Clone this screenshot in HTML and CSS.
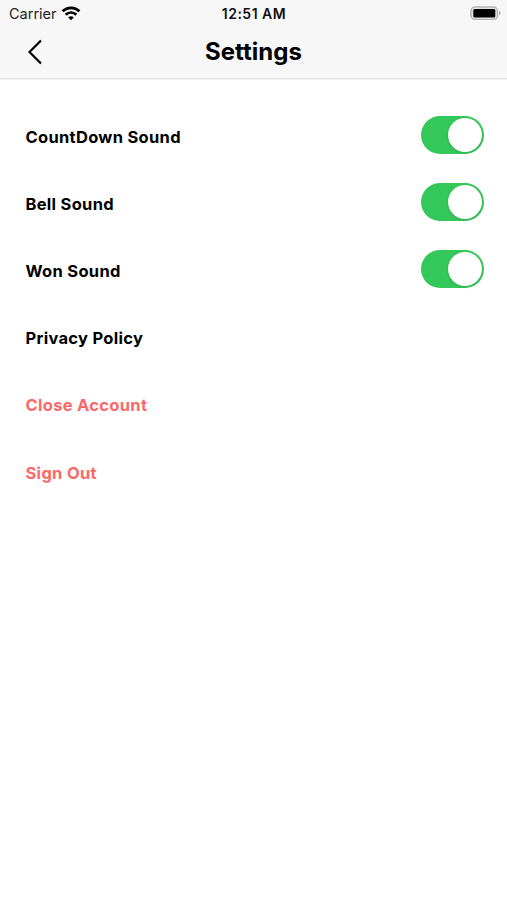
FILE: index.html
```html
<!DOCTYPE html>
<html lang="en">
<head>
<meta charset="utf-8">
<title>Settings</title>
<link rel="stylesheet" href="styles.css">
</head>
<body>
<header class="header">
  <div class="status">
    <div class="carrier"><span>Carrier</span>
      <svg class="wifi" viewBox="0 0 20 15" width="20" height="15"><path d="M1.600 5.300a12 12 0 0 1 16.800 0M4.700 8.700a7.500 7.500 0 0 1 10.600 0" fill="none" stroke="#000" stroke-width="2.700"/><path d="M7.200 11.400a4.200 4.200 0 0 1 5.600 0L10 14.300z"/></svg>
    </div>
    <div class="time">12:51 AM</div>
    <svg class="battery" viewBox="0 0 31 14" width="31" height="14"><rect x="1" y="1" width="26.500" height="12.500" rx="4" fill="#e4e4e4" stroke="#b5b5b5" stroke-width="1.500"/><rect x="3.300" y="3" width="22" height="8.500" rx="1.500"/><path d="M29 5q1.700.7 1.700 2T29 9z" fill="#aaa"/></svg>
  </div>
  <div class="nav">
    <svg class="back" viewBox="0 0 16 26" width="16" height="26"><path d="M14 1.500 2.500 13 14 24.500" fill="none" stroke="#000" stroke-width="2.200"/></svg>
    <h1 class="title">Settings</h1>
  </div>
</header>
<main class="list">
  <div class="row"><span class="label">CountDown Sound</span><span class="toggle"></span></div>
  <div class="row"><span class="label">Bell Sound</span><span class="toggle"></span></div>
  <div class="row"><span class="label">Won Sound</span><span class="toggle"></span></div>
  <div class="row"><span class="label">Privacy Policy</span></div>
  <div class="row danger"><span class="label">Close Account</span></div>
  <div class="row danger"><span class="label">Sign Out</span></div>
</main>
</body>
</html>
```
FILE: styles.css
```css
* { box-sizing: border-box; }
body { margin: 0; min-height: 900px; background: #fff; color: #000; font-family: Inter, sans-serif; }
.header { height: 79px; background: #f7f7f7; border-bottom: 1px solid #e6e6e6; box-shadow: 0 1px 1px #f0f0f0; }
.status { display: grid; grid-template-columns: 1fr auto 1fr; align-items: center; height: 27px; padding: 0 6px 0 9px; font-size: 14.5px; }
.carrier { display: flex; align-items: center; gap: 4px; color: #222; }
.wifi { margin-top: -1px; }
.time { font-size: 14px; font-weight: 600; letter-spacing: .5px; margin-right: 2px; color: #111; }
.battery { justify-self: end; margin-top: -1px; }
.nav { display: grid; grid-template-columns: 1fr auto 1fr; align-items: center; height: 50px; }
.back { margin-left: 27px; }
.title { margin: 0; font-size: 24px; line-height: 30px; font-weight: 700; }
.list { padding-top: 24px; }
.row { display: flex; align-items: center; justify-content: space-between; height: 67.200px; padding: 0 23px 0 25.500px; }
.label { font-size: 16.500px; line-height: 20px; font-weight: 700; letter-spacing: .3px; }
.danger { color: #fc6868; }
.toggle { width: 63px; height: 38px; padding: 2px; margin-bottom: 4px; border-radius: 19px; background: #34c759; display: flex; justify-content: flex-end; }
.toggle::after { content: ""; width: 34px; height: 34px; border-radius: 50%; background: #fff; box-shadow: 0 1px 3px rgba(0, 0, 0, .12); }
```
